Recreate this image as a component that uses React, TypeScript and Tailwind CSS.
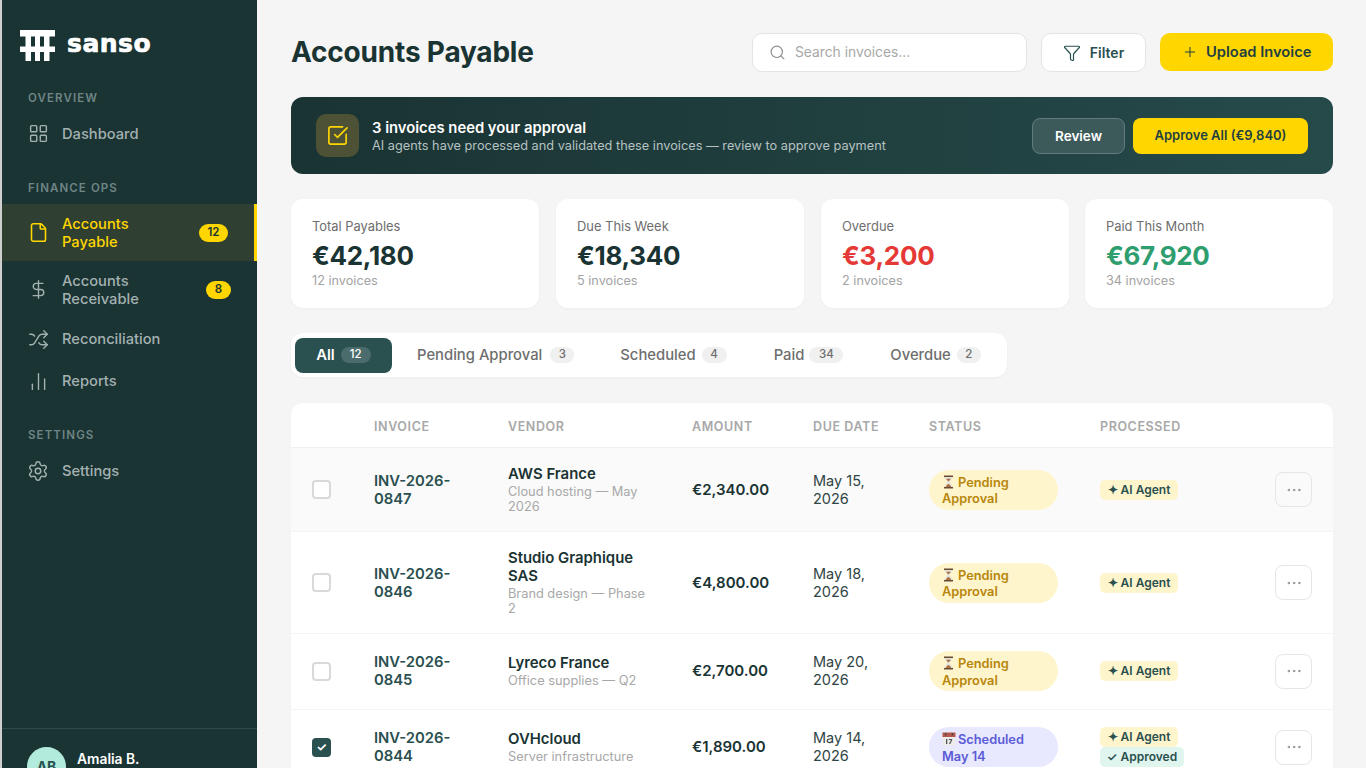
import {
  ChartNoAxesColumn,
  DollarSign,
  Ellipsis,
  File,
  Funnel,
  LayoutGrid,
  Plus,
  Search,
  Settings,
  Shuffle,
  SquareCheckBig,
} from "lucide-react";

const font = "font-['Inter',sans-serif]";

const stats = [
  { label: "Total Payables", value: "€42,180", sub: "12 invoices", color: "text-[#1a3333]", cls: "" },
  { label: "Due This Week", value: "€18,340", sub: "5 invoices", color: "text-[#1a3333]", cls: "ml-[17px]" },
  { label: "Overdue", value: "€3,200", sub: "2 invoices", color: "text-[#e53935]", cls: "ml-[17px]" },
  { label: "Paid This Month", value: "€67,920", sub: "34 invoices", color: "text-[#2e9e6f]", cls: "ml-[16px]" },
];

const tabs = [
  { label: "Pending Approval", count: "3", cls: "ml-[25px]", pill: "w-[24px] ml-[8px]" },
  { label: "Scheduled", count: "4", cls: "ml-[46px]", pill: "w-[25px] ml-[6px]" },
  { label: "Paid", count: "34", cls: "ml-[47px]", pill: "w-[34px] ml-[5px]" },
  { label: "Overdue", count: "2", cls: "ml-[47px]", pill: "w-[24px] ml-[6px]" },
];

const rows = [
  { no: "INV-2026-0847", vendor: "AWS France", desc: "Cloud hosting — May 2026", amount: "€2,340.00", due: "May 15, 2026", status: "pending", tint: true },
  { no: "INV-2026-0846", vendor: "Studio Graphique SAS", desc: "Brand design — Phase 2", amount: "€4,800.00", due: "May 18, 2026", status: "pending" },
  { no: "INV-2026-0845", vendor: "Lyreco France", desc: "Office supplies — Q2", amount: "€2,700.00", due: "May 20, 2026", status: "pending", extra: true },
  { no: "INV-2026-0844", vendor: "OVHcloud", desc: "Server infrastructure", amount: "€1,890.00", due: "May 14, 2026", status: "scheduled", checked: true },
];

function Logo() {
  return (
    <svg width="35" height="32" viewBox="0 0 35 32" fill="#fff">
      <rect x="0" y="0" width="35" height="6.5" />
      <rect x="0" y="16.5" width="35" height="5.5" />
      <rect x="5.5" y="0" width="5.5" height="31" />
      <rect x="15" y="0" width="5" height="31" />
      <rect x="24" y="0" width="5.5" height="31" />
    </svg>
  );
}

function Hourglass() {
  return (
    <svg width="13" height="14" viewBox="0 0 13 14" className="inline-block align-[-2px] mr-[3px]">
      <rect x="2" y="0.5" width="9" height="1.6" fill="#6b4a32" />
      <rect x="2" y="11.9" width="9" height="1.6" fill="#6b4a32" />
      <path d="M3 2.1h7c0 2.6-2.2 3.6-2.6 4.9.4 1.3 2.6 2.3 2.6 4.9H3c0-2.6 2.2-3.6 2.6-4.9C5.200 5.700 3 4.700 3 2.100z" fill="#e4e2de" />
      <path d="M4 3.800h5L6.500 6.600zM3.800 11.900c.4-1.600 1.700-2.600 2.700-3 1 .4 2.300 1.400 2.700 3z" fill="#a9713f" />
    </svg>
  );
}

function CalendarEmoji() {
  return (
    <svg width="14" height="14" viewBox="0 0 14 14" className="inline-block align-[-2px] mr-[2px]">
      <rect x="0.5" y="0.500" width="13" height="13" rx="1" fill="#ececec" />
      <rect x="0.5" y="0.500" width="13" height="4.500" fill="#b5564f" />
      <rect x="3" y="1" width="1.200" height="2.500" fill="#444" />
      <rect x="9.800" y="1" width="1.200" height="2.500" fill="#444" />
      <rect x="4" y="7" width="1.300" height="5" fill="#555" />
      <path d="M6.800 7h3.400v1.100L8.300 12H7l1.900-3.900H6.800z" fill="#555" />
    </svg>
  );
}

function NavItem({ icon, label, active, badge, badgeCls }: { icon: React.ReactNode; label: React.ReactNode; active?: boolean; badge?: string; badgeCls?: string }) {
  return (
    <div
      className={`flex items-center pl-[25px] ${active ? "bg-[#2f4032] text-[#ffd600] border-r-[3px] border-[#ffd600]" : "text-[#a3b1b1]"}`}
    >
      <span className="w-[22px] flex justify-center shrink-0">{icon}</span>
      <span className="ml-[13px] text-[14.7px] leading-[18px] font-medium">{label}</span>
      {badge && (
        <span className={`ml-auto mr-[26px] h-[18px] flex items-center justify-center rounded-full bg-[#ffd600] text-[#1a3333] text-[11.500px] font-semibold ${badgeCls}`}>
          {badge}
        </span>
      )}
    </div>
  );
}

function SectionLabel({ children, cls }: { children: React.ReactNode; cls: string }) {
  return <div className={`pl-[26px] text-[11.500px] leading-[14px] font-semibold tracking-[1.1px] text-[#6f8585] ${cls}`}>{children}</div>;
}

function Sidebar() {
  return (
    <aside className="w-[255px] shrink-0 bg-[#1a3333] h-[768px] overflow-hidden">
      <div className="h-[728px]">
        <div className="flex items-center pl-[18px] pt-[30px] h-[61px]">
          <Logo />
          <span className="ml-[12px] font-['DejaVu_Sans',sans-serif] font-bold text-[25px] leading-[30px] tracking-[0.5px] text-white -mt-[3px] [-webkit-text-stroke:0.7px_white]">sanso</span>
        </div>
        <SectionLabel cls="mt-[30px]">OVERVIEW</SectionLabel>
        <div className="mt-[18px]">
          <NavItem icon={<LayoutGrid size={21} strokeWidth={1.6} />} label="Dashboard" />
        </div>
        <SectionLabel cls="mt-[37px]">FINANCE OPS</SectionLabel>
        <div className="mt-[9px]">
          <div className="h-[57px] grid">
            <NavItem active icon={<File size={21} strokeWidth={1.8} />} label={<>Accounts<br />Payable</>} badge="12" badgeCls="w-[29px]" />
          </div>
          <div className="h-[57px] grid">
            <NavItem icon={<DollarSign size={21} strokeWidth={1.6} />} label={<>Accounts<br />Receivable</>} badge="8" badgeCls="w-[25px]" />
          </div>
          <div className="h-[42px] grid">
            <NavItem icon={<Shuffle size={21} strokeWidth={1.6} />} label="Reconciliation" />
          </div>
          <div className="h-[42px] grid">
            <NavItem icon={<ChartNoAxesColumn size={21} strokeWidth={1.6} />} label="Reports" />
          </div>
        </div>
        <SectionLabel cls="mt-[26px]">SETTINGS</SectionLabel>
        <div className="mt-[18px]">
          <NavItem icon={<Settings size={22} strokeWidth={1.6} />} label="Settings" />
        </div>
      </div>
      <div className="border-t border-[#2f4a4a] pt-[18px] pl-[25px] flex gap-[11px]">
        <div className="w-[39px] h-[39px] rounded-full bg-[#b2ebdb] text-[#2a5050] flex items-center justify-center text-[14px] font-bold">
          AB
        </div>
        <div className="text-white text-[13.800px] leading-[18px] font-semibold pt-[3px]">Amalia B.</div>
      </div>
    </aside>
  );
}

function Header() {
  return (
    <div className="flex items-start h-[39px]">
      <h1 className="text-[28px] leading-[38px] font-bold text-[#1a3333] tracking-[-0.2px]">Accounts Payable</h1>
      <div className="ml-auto w-[275px] h-[39px] rounded-[10px] bg-white border border-[#e4e4e4] flex items-center pl-[16px] text-[#a8a8a8]">
        <Search size={17} strokeWidth={1.6} className="text-[#8a8a8a]" />
        <span className="ml-[9px] text-[13.800px]">Search invoices...</span>
      </div>
      <div className="ml-[14px] w-[105px] h-[39px] rounded-[10px] bg-white border border-[#e4e4e4] flex items-center justify-center text-[#2a5050] text-[14px] font-semibold">
        <Funnel size={18} strokeWidth={1.6} />
        <span className="ml-[9px]">Filter</span>
      </div>
      <div className="ml-[14px] w-[173px] h-[38px] rounded-[10px] bg-[#ffd600] flex items-center pl-[22px] text-[#1f4040] text-[14.700px] font-semibold">
        <Plus size={16} strokeWidth={1.5} />
        <span className="ml-[8px]">Upload Invoice</span>
      </div>
    </div>
  );
}

function Banner() {
  return (
    <div className="mt-[25px] h-[77px] rounded-[12px] bg-gradient-to-r from-[#1a3333] to-[#264a4a] flex items-center pl-[25px] pr-[25px]">
      <div className="w-[43px] h-[43px] rounded-[10px] bg-[#4d5236] flex items-center justify-center text-[#ffd600]">
        <SquareCheckBig size={23} strokeWidth={1.7} />
      </div>
      <div className="ml-[13px] pt-[3px]">
        <div className="text-white text-[14.800px] leading-[17px] font-semibold">3 invoices need your approval</div>
        <div className="mt-[1px] text-[#b6c2c2] text-[12.750px] leading-[16px]">AI agents have processed and validated these invoices — review to approve payment</div>
      </div>
      <div className="ml-auto mt-[1px] w-[93px] h-[36px] rounded-[8px] bg-[#3d5a5a] border border-[#627a7a] flex items-center justify-center text-white text-[13.500px] font-semibold">
        Review
      </div>
      <div className="ml-[8px] mt-[1px] w-[175px] h-[36px] rounded-[8px] bg-[#ffd600] flex items-center justify-center text-[#1f4040] text-[13px] font-semibold">
        Approve All (€9,840)
      </div>
    </div>
  );
}

function Stats() {
  return (
    <div className="mt-[25px] flex">
      {stats.map((s) => (
        <div key={s.label} className={`w-[248px] h-[109px] bg-white rounded-[12px] pl-[21px] pt-[20px] shadow-[0_1px_3px_rgba(0,0,0,0.04)] ${s.cls}`}>
          <div className="text-[12.900px] leading-[16px] text-[#6e6e6e]">{s.label}</div>
          <div className={`mt-[4px] text-[26px] leading-[34px] font-bold tracking-[-0.3px] ${s.color}`}>{s.value}</div>
          <div className="-mt-[1px] text-[12.700px] leading-[18px] text-[#a3a3a3]">{s.sub}</div>
        </div>
      ))}
    </div>
  );
}

function Tabs() {
  return (
    <div className="mt-[25px] w-[716px] h-[44px] bg-white rounded-[12px] flex items-center pl-[4px] shadow-[0_1px_3px_rgba(0,0,0,0.04)]">
      <div className="w-[97px] h-[35px] rounded-[8px] bg-[#2a5050] flex items-center justify-center text-white text-[14.800px] font-semibold">
        All
        <span className="ml-[6px] w-[30px] h-[16px] rounded-full bg-[#4a6c6c] text-[11.500px] font-medium flex items-center justify-center">12</span>
      </div>
      {tabs.map((t) => (
        <div key={t.label} className={`flex items-center text-[14.800px] font-medium text-[#6e6e6e] ${t.cls}`}>
          {t.label}
          <span className={`h-[16px] rounded-full bg-[#f0f0f0] text-[11.500px] text-[#6e6e6e] flex items-center justify-center ${t.pill}`}>{t.count}</span>
        </div>
      ))}
    </div>
  );
}

const cols = "grid grid-cols-[62px_134px_184px_121px_116px_171px_1fr] px-[21px]";

function InvoiceTable() {
  return (
    <div className="mt-[26px] bg-white rounded-t-[12px]">
      <div className={`${cols} h-[45px] pt-[4px] items-center border-b border-[#f0f0f0] text-[12.500px] font-semibold tracking-[0.6px] text-[#a8a8a8]`}>
        <div />
        <div>INVOICE</div>
        <div>VENDOR</div>
        <div>AMOUNT</div>
        <div>DUE DATE</div>
        <div>STATUS</div>
        <div>PROCESSED</div>
      </div>
      {rows.map((r) => (
        <div key={r.no} className={`${cols} pt-[17px] items-center border-b border-[#f4f4f4] ${r.extra ? "pb-[18px]" : "pb-[17px]"} ${r.tint ? "bg-[#fafafa]" : ""}`}>
          <div>
            {r.checked ? (
              <div className="w-[19px] h-[19px] rounded-[4px] bg-[#2a5050] flex items-center justify-center text-white text-[12px] font-bold">✓</div>
            ) : (
              <div className="w-[19px] h-[19px] rounded-[4px] border-2 border-[#d9d9d9] bg-white" />
            )}
          </div>
          <div className="w-[100px] text-[14.800px] leading-[18px] font-semibold text-[#2a5050]">{r.no}</div>
          <div className="w-[143px]">
            <div className="text-[14.900px] leading-[18px] font-semibold text-[#1a3333]">{r.vendor}</div>
            <div className="pt-[1px] text-[12.800px] leading-[15px] text-[#a8a8a8]">{r.desc}</div>
          </div>
          <div className="pt-[1px] text-[15px] font-semibold text-[#1a3333]">{r.amount}</div>
          <div className="w-[76px] text-[14.500px] leading-[18px] text-[#2f4545]">{r.due}</div>
          <div>
            {r.status === "pending" ? (
              <div className="w-[129px] h-[40px] rounded-[20px] bg-[#fff5cc] px-[13px] pt-[5px] text-[12.800px] leading-[16.500px] font-semibold text-[#b8860b]">
                <Hourglass />
                Pending Approval
              </div>
            ) : (
              <div className="w-[129px] h-[40px] rounded-[20px] bg-[#e8e8ff] px-[13px] pt-[5px] text-[12.800px] leading-[16.500px] font-semibold text-[#5b5bd6]">
                <CalendarEmoji />
                Scheduled May 14
              </div>
            )}
          </div>
          <div className="flex items-center justify-between">
            <div className="flex flex-col items-start">
              <span className="h-[20px] w-[78px] rounded-[5px] bg-[#fff5cc] flex items-center justify-center text-[12px] font-semibold text-[#2a5050]">✦ AI Agent</span>
              {r.checked && (
                <span className="h-[20px] w-[84px] rounded-[5px] bg-[#e0f5ee] flex items-center justify-center text-[12px] font-semibold text-[#2a5050]">✓ Approved</span>
              )}
            </div>
            <div className={`w-[37px] h-[35px] rounded-[8px] border-[1.5px] border-[#e6e6e6] flex items-center justify-center text-[#888] ${r.tint ? "bg-[#fafafa]" : "bg-white"}`}>
              <Ellipsis size={18} strokeWidth={1.3} />
            </div>
          </div>
        </div>
      ))}
    </div>
  );
}

export default function App() {
  return (
    <div className={`${font} flex w-[1366px] h-[768px] overflow-hidden bg-[#f5f5f5]`}>
      <div className="w-[2px] shrink-0 bg-[#cfcfcf]" />
      <Sidebar />
      <main className="flex-1 min-w-0 pl-[34px] pr-[33px] pt-[33px]">
        <Header />
        <Banner />
        <Stats />
        <Tabs />
        <InvoiceTable />
      </main>
    </div>
  );
}
